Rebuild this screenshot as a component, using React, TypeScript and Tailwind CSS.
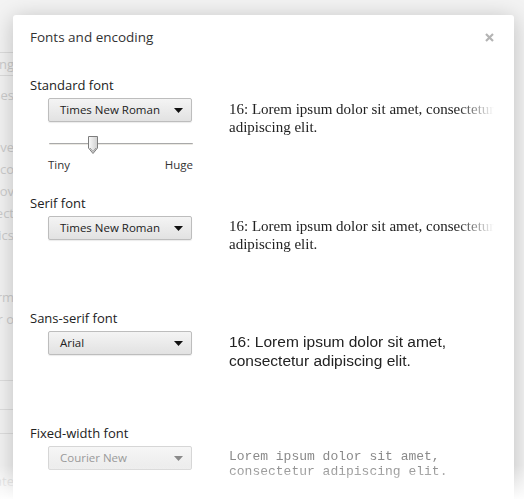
import React from 'react';

const ui = "font-['Open_Sans','Noto_Sans',sans-serif]";

const bgWords = [
  { t: 'Browsing', y: 'mt-[52px]', box: true },
  { t: 'Passes', y: 'mt-[10px]' },
  { t: 'Improve', y: 'mt-[34px]' },
  { t: 'Use a co', y: 'mt-[4px]' },
  { t: 'Remov', y: 'mt-[4px]' },
  { t: 'Protect', y: 'mt-[4px]' },
  { t: 'Statistics', y: 'mt-[4px]' },
  { t: 'Inform', y: 'mt-[44px]' },
  { t: 'Clear o', y: 'mt-[4px]' },
];

const Caret = ({ disabled }: { disabled?: boolean }) => (
  <svg width="9" height="5" viewBox="0 0 9 5" className="shrink-0">
    <path d="M0 0 H9 L4.5 5 Z" fill={disabled ? '#8a8a8a' : '#111'} />
  </svg>
);

const FontSelect = ({ value, disabled }: { value: string; disabled?: boolean }) => (
  <div
    className={
      disabled
        ? 'ml-[18px] mt-[4px] flex h-[24px] w-[144px] items-center justify-between rounded-[2px] border border-[#d6d6d6] bg-gradient-to-b from-[#f6f6f6] to-[#ececec] pl-[11px] pr-[8px] text-[11.5px] text-[#9a9a9a]'
        : 'ml-[18px] mt-[4px] flex h-[24px] w-[144px] items-center justify-between rounded-[2px] border border-[#bdbdbd] bg-gradient-to-b from-[#f4f4f4] to-[#e2e2e2] pl-[11px] pr-[8px] text-[11.5px] text-[#222] shadow-[0_1px_1px_rgba(0,0,0,0.08)]'
    }
  >
    <span>{value}</span>
    <Caret disabled={disabled} />
  </div>
);

const Sample = ({ lines, className }: { lines: string[]; className: string }) => (
  <div className={`w-[265px] overflow-hidden [mask-image:linear-gradient(to_right,black_86%,transparent)] ${className}`}>
    {lines.map((l) => (
      <div key={l} className="whitespace-nowrap">{l}</div>
    ))}
  </div>
);

const Section = ({
  label,
  children,
  sample,
  height,
}: {
  label: string;
  children: React.ReactNode;
  sample: React.ReactNode;
  height: string;
}) => (
  <div className={`flex ${height}`}>
    <div className="w-[199px] shrink-0">
      <div className="h-[18px] text-[13px] leading-[18px] text-[#222]">{label}</div>
      {children}
    </div>
    <div className="pt-[22px]">{sample}</div>
  </div>
);

export default function App() {
  return (
    <div className={`relative h-[499px] w-[524px] overflow-hidden bg-[#f3f3f3] ${ui}`}>
      {/* page under the overlay */}
      <div className="absolute left-[-60px] top-0 flex w-[74px] flex-col items-end text-[13px] leading-[18px] text-[#cdcdcd]">
        {bgWords.map((w) => (
          <div
            key={w.t}
            className={`${w.y} whitespace-nowrap ${w.box ? 'border-y border-[#dcdcdc] py-[2px]' : ''}`}
          >
            {w.t}
          </div>
        ))}
        <div className="mt-[52px] h-[30px] w-full border-y border-[#dedede]" />
        <div className="mt-[2px] h-[22px] w-full border-b border-[#dedede]" />
        <div className="mt-[38px] whitespace-nowrap">Translate</div>
      </div>

      {/* dialog */}
      <div className="absolute left-[13px] top-[15px] h-[520px] w-[501px] rounded-[3px] bg-white shadow-[0_3px_22px_rgba(0,0,0,0.22)]">
        <div className="flex items-center justify-between pl-[17px] pr-[20px] pt-[12px]">
          <div className="text-[13.5px] leading-[20px] text-[#333]">Fonts and encoding</div>
          <svg width="9" height="9" viewBox="0 0 9 9">
            <path d="M1 1 L8 8 M8 1 L1 8" stroke="#b4b4b4" strokeWidth="2.2" />
          </svg>
        </div>

        <div className="mt-[29px] flex flex-col pl-[17px]">
          <Section
            label="Standard font"
            height="h-[118px]"
            sample={
              <Sample
                className="pt-[2px] font-['Liberation_Serif',serif] text-[15px] leading-[18px] text-[#222]"
                lines={['16: Lorem ipsum dolor sit amet, consectetur', 'adipiscing elit.']}
              />
            }
          >
            <FontSelect value="Times New Roman" />
            <div className="ml-[19px] mt-[13px] flex w-[144px] items-center">
              <div className="relative h-[20px] w-full">
                <div className="absolute left-0 right-0 top-[8px] h-[2px] rounded-full border-t border-[#a9a9a9] bg-[#ebe9e3]" />
                <svg className="absolute left-[38px] top-0" width="12" height="20" viewBox="0 0 12 20">
                  <defs>
                    <linearGradient id="th" x1="0" x2="1" y1="0" y2="0">
                      <stop offset="0" stopColor="#fafafa" />
                      <stop offset="1" stopColor="#cfcfcf" />
                    </linearGradient>
                  </defs>
                  <path d="M1.5 1.5 H10.5 V13 L6 18.5 L1.5 13 Z" fill="url(#th)" stroke="#7d7d7d" strokeWidth="1" />
                  <path d="M3 13 L6 16.5 L9 13" fill="none" stroke="#9a9a9a" strokeWidth="1" />
                </svg>
              </div>
            </div>
            <div className="ml-[18px] mt-[3px] flex w-[145px] justify-between text-[11.5px] leading-[14px] text-[#333]">
              <span>Tiny</span>
              <span>Huge</span>
            </div>
          </Section>

          <Section
            label="Serif font"
            height="h-[115px]"
            sample={
              <Sample
                className="pt-[1px] font-['Liberation_Serif',serif] text-[15px] leading-[18px] text-[#222]"
                lines={['16: Lorem ipsum dolor sit amet, consectetur', 'adipiscing elit.']}
              />
            }
          >
            <FontSelect value="Times New Roman" />
          </Section>

          <Section
            label="Sans-serif font"
            height="h-[115px]"
            sample={
              <Sample
                className="pt-[1px] font-['Liberation_Sans',Arial,sans-serif] text-[15.5px] leading-[19px] text-[#222]"
                lines={['16: Lorem ipsum dolor sit amet,', 'consectetur adipiscing elit.']}
              />
            }
          >
            <FontSelect value="Arial" />
          </Section>

          <Section
            label="Fixed-width font"
            height="h-[115px]"
            sample={
              <Sample
                className="pt-[3px] font-['Liberation_Mono','Courier_New',monospace] text-[13px] leading-[15px] text-[#8a8a8a]"
                lines={['Lorem ipsum dolor sit amet,', 'consectetur adipiscing elit.']}
              />
            }
          >
            <FontSelect value="Courier New" disabled />
          </Section>
        </div>
      </div>

      {/* bottom fade */}
      <div className="pointer-events-none absolute bottom-0 left-0 right-0 h-[34px] bg-gradient-to-b from-white/0 to-white/95" />
    </div>
  );
}
